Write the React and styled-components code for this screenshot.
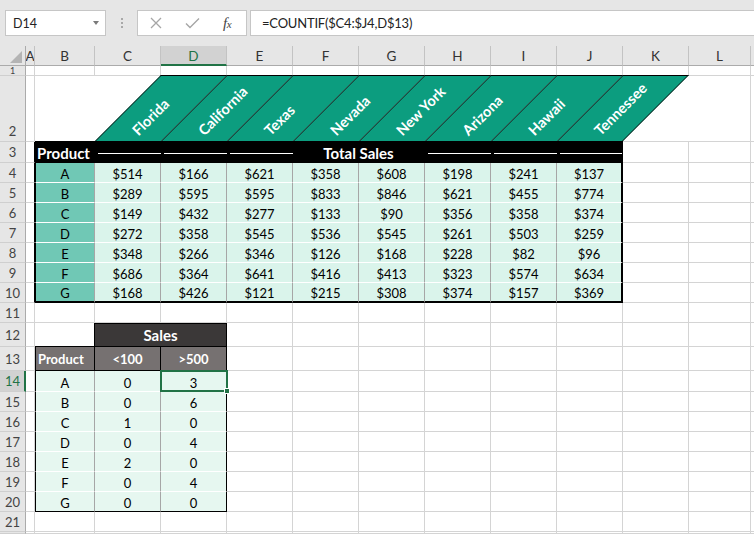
import React from 'react';
import styled, { createGlobalStyle } from 'styled-components';

const Global = createGlobalStyle`
  html, body { margin: 0; padding: 0; width: 754px; height: 534px; overflow: hidden; background: #fff; }
  body { font-family: Lato, "Liberation Sans", sans-serif; }
  *, *::before, *::after { box-sizing: border-box; }
`;

const GRID = '1px solid #d4d4d4';
const BLACK = '1px solid #000';
const BLACK2 = '2px solid #000';
const WHITE = '1px solid #fff';
const SEP = '1px solid #a6a6a6';
const NONE = 'none';
const GREEN = '#217346';

const TEAL_DARK = '#0c9d7f';
const TEAL = '#70c8b5';
const MINT = '#daf4eb';
const MINT2 = '#e6f7f0';
const DARK = '#3b3838';
const GREY = '#767171';

const STATES = ['Florida', 'California', 'Texas', 'Nevada', 'New York', 'Arizona', 'Hawaii', 'Tennessee'];
const PRODUCTS = ['A', 'B', 'C', 'D', 'E', 'F', 'G'];
const SALES = [
  [514, 166, 621, 358, 608, 198, 241, 137],
  [289, 595, 595, 833, 846, 621, 455, 774],
  [149, 432, 277, 133, 90, 356, 358, 374],
  [272, 358, 545, 536, 545, 261, 503, 259],
  [348, 266, 346, 126, 168, 228, 82, 96],
  [686, 364, 641, 416, 413, 323, 574, 634],
  [168, 426, 121, 215, 308, 374, 157, 369],
];
const COUNTS = [[0, 3], [0, 6], [1, 0], [0, 4], [2, 0], [0, 4], [0, 0]];
const COLS = ['A', 'B', 'C', 'D', 'E', 'F', 'G', 'H', 'I', 'J', 'K', 'L', ''];

const Window = styled.div`
  width: 754px;
  height: 534px;
  display: flex;
  flex-direction: column;
  overflow: hidden;
`;

const Bar = styled.div`
  flex: none;
  height: 46px;
  background: #e6e6e6;
  display: flex;
  align-items: flex-start;
  padding: 10px 0 0 5px;
  color: #222;
`;

const NameBox = styled.div`
  width: 101px;
  height: 26px;
  background: #fff;
  border: 1px solid #c6c6c6;
  display: flex;
  align-items: center;
  padding: 0 6px 0 7px;
  font-size: 12.5px;
`;

const Caret = styled.span`
  margin-left: auto;
  width: 0;
  height: 0;
  border-left: 3.5px solid transparent;
  border-right: 3.5px solid transparent;
  border-top: 4px solid #7a7a7a;
`;

const Grip = styled.div`
  margin-left: 15px;
  padding-top: 8px;
  display: flex;
  flex-direction: column;
  gap: 2px;
`;

const Dot = styled.span`
  width: 2px;
  height: 2px;
  background: #a8a8a8;
`;

const FxBox = styled.div`
  margin-left: 14px;
  width: 110px;
  height: 26px;
  background: #fff;
  border: 1px solid #c6c6c6;
  display: flex;
  align-items: center;
  padding-left: 12px;
  gap: 23px;
`;

const Fx = styled.span`
  font-family: "Liberation Serif", serif;
  font-style: italic;
  font-size: 15px;
  color: #444;
  display: flex;
  align-items: baseline;
  letter-spacing: -0.5px;
`;

const FxSub = styled.span`
  font-size: 11px;
`;

const FormulaInput = styled.div`
  flex: 1;
  margin-left: 3px;
  height: 26px;
  background: #fff;
  border: 1px solid #c6c6c6;
  border-right: none;
  display: flex;
  align-items: center;
  padding-left: 11px;
  font-size: 13px;
  letter-spacing: -0.2px;
  white-space: nowrap;
`;

const Sheet = styled.div`
  flex: 1;
  display: grid;
  grid-template-columns: 26px 9px 60px repeat(9, 66px) 62px 1fr;
  grid-template-rows: 20px 10px 66px 21px repeat(7, 20px) 20px 24px 24px 21px repeat(7, 20px) 1fr;
  background: #fff;
  overflow: hidden;
`;

const Corner = styled.div`
  background: #e6e6e6;
  border-right: 1px solid #ababab;
  border-bottom: 1px solid #ababab;
  display: flex;
  align-items: flex-end;
  justify-content: flex-end;
  padding: 0 3px 2px 0;
`;

const Triangle = styled.span`
  width: 0;
  height: 0;
  border-left: 12px solid transparent;
  border-bottom: 12px solid #b4b4b4;
`;

const ColHead = styled.div`
  background: ${p => (p.$sel ? '#d2d2d2' : '#e6e6e6')};
  border-right: 1px solid #c3c3c3;
  border-bottom: ${p => (p.$sel ? `2px solid ${GREEN}` : '1px solid #ababab')};
  color: ${p => (p.$sel ? GREEN : '#333')};
  font-size: 13.5px;
  display: flex;
  align-items: center;
  justify-content: center;
  padding-top: ${p => (p.$sel ? '1px' : '0')};
  overflow: hidden;
`;

const RowHead = styled.div`
  background: ${p => (p.$sel ? '#d2d2d2' : '#e6e6e6')};
  border-right: ${p => (p.$sel ? `2px solid ${GREEN}` : '1px solid #ababab')};
  border-bottom: 1px solid #cfcfcf;
  color: ${p => (p.$sel ? GREEN : '#444')};
  font-size: ${p => (p.$tiny ? '9px' : '13px')};
  line-height: ${p => (p.$tiny ? '9px' : 'normal')};
  display: flex;
  align-items: ${p => (p.$v === 'end' ? 'flex-end' : 'center')};
  justify-content: center;
  padding-bottom: ${p => (p.$v === 'end' ? '2px' : '0')};
  padding-left: ${p => (p.$sel ? '1px' : '0')};
  overflow: hidden;
`;

const Cell = styled.div`
  position: relative;
  display: flex;
  min-width: 0;
  align-items: ${p => (p.$v === 'center' ? 'center' : 'flex-end')};
  justify-content: ${p => (p.$align === 'center' ? 'center' : p.$align === 'right' ? 'flex-end' : 'flex-start')};
  padding: 0 2px 0 ${p => (p.$padL != null ? p.$padL : 2)}px;
  background: ${p => p.$bg || 'transparent'};
  border-right: ${p => p.$r || GRID};
  border-bottom: ${p => p.$b || GRID};
  border-left: ${p => p.$l || NONE};
  border-top: ${p => p.$t || NONE};
  color: ${p => p.$color || '#000'};
  font-size: ${p => p.$size || 13}px;
  font-weight: ${p => (p.$bold ? 700 : 400)};
  white-space: nowrap;
  grid-column: ${p => (p.$span ? `span ${p.$span}` : 'auto')};
`;

const SlantCell = styled.div`
  position: relative;
  border-bottom: ${BLACK};
`;

const Slant = styled.div`
  width: 66px;
  height: 66px;
  margin-top: -1px;
  background: ${TEAL_DARK};
  border-top: 1px solid #000;
  border-left: 1px solid #111;
  border-right: ${p => (p.$last ? '1px solid #111' : 'none')};
  transform-origin: 0 100%;
  transform: skewX(-45deg);
`;

const SlantLabel = styled.span`
  position: absolute;
  left: 45px;
  bottom: 3px;
  z-index: 1;
  color: #fff;
  font-size: 14.5px;
  font-weight: 700;
  line-height: 14px;
  white-space: nowrap;
  transform-origin: 0 100%;
  transform: rotate(-45deg);
`;

const Rule = styled.span`
  flex: 1;
  height: 1px;
  margin: 2px -3px 0 1px;
  background: #fff;
`;

const Selection = styled.div`
  position: absolute;
  left: -1px;
  top: -1px;
  right: -2px;
  bottom: -1px;
  border: 2px solid ${GREEN};
  z-index: 3;
  pointer-events: none;
`;

const Handle = styled.span`
  position: absolute;
  right: -4px;
  bottom: -4px;
  width: 6px;
  height: 6px;
  background: ${GREEN};
  border: 1px solid #fff;
`;

const XIcon = () => (
  <svg width="12" height="12" viewBox="0 0 12 12">
    <path d="M1 1 L11 11 M11 1 L1 11" stroke="#a6a6a6" strokeWidth="1.3" fill="none" />
  </svg>
);

const CheckIcon = () => (
  <svg width="15" height="12" viewBox="0 0 15 12">
    <path d="M1 6.5 L5 10.5 L14 1.5" stroke="#a6a6a6" strokeWidth="1.4" fill="none" />
  </svg>
);

function plain(row, from) {
  return COLS.slice(from).map((c, i) => <Cell key={`${row}-${from + i}`} />);
}

export default function App() {
  const rows = [];

  // Row 1
  rows.push(<RowHead key="h1" $tiny>1</RowHead>, ...plain(1, 0));

  // Row 2 – slanted headers
  rows.push(
    <RowHead key="h2" $v="end">2</RowHead>,
    <Cell key="2-A" />,
    <Cell key="2-B" $r={NONE} $b={BLACK} />,
    ...STATES.map((s, i) => (
      <SlantCell key={`2-s${i}`}>
        <Slant $last={i === STATES.length - 1} />
        <SlantLabel>{s}</SlantLabel>
      </SlantCell>
    )),
    <Cell key="2-K" $r={NONE} />,
    <Cell key="2-L" />,
    <Cell key="2-M" />
  );

  // Row 3 – header band
  const band = { $bg: '#000', $r: BLACK, $b: BLACK };
  rows.push(
    <RowHead key="h3">3</RowHead>,
    <Cell key="3-A" $r={BLACK} />,
    <Cell key="3-B" {...band} $l={BLACK} $padL={1} $color="#fff" $bold $size={15}>Product</Cell>,
    <Cell key="3-C" {...band} $v="center"><Rule /></Cell>,
    <Cell key="3-D" {...band} $v="center"><Rule /></Cell>,
    <Cell key="3-E" {...band} $v="center"><Rule /></Cell>,
    <Cell key="3-F" {...band} $span={2} $align="center" $color="#fff" $bold $size={15}>Total Sales</Cell>,
    <Cell key="3-H" {...band} $v="center"><Rule /></Cell>,
    <Cell key="3-I" {...band} $v="center"><Rule /></Cell>,
    <Cell key="3-J" {...band} $r={BLACK2} $v="center"><Rule /></Cell>,
    <Cell key="3-K" />,
    <Cell key="3-L" />,
    <Cell key="3-M" />
  );

  // Rows 4-10
  SALES.forEach((vals, i) => {
    const r = i + 4;
    const last = i === SALES.length - 1;
    const bottom = last ? BLACK2 : WHITE;
    rows.push(
      <RowHead key={`h${r}`}>{r}</RowHead>,
      <Cell key={`${r}-A`} $r={BLACK} />,
      <Cell key={`${r}-B`} $bg={TEAL} $l={BLACK} $r={SEP} $b={bottom} $align="center">{PRODUCTS[i]}</Cell>,
      ...vals.map((v, j) => (
        <Cell key={`${r}-v${j}`} $bg={MINT} $r={j === 7 ? BLACK2 : SEP} $b={bottom} $align="center">${v}</Cell>
      )),
      <Cell key={`${r}-K`} />,
      <Cell key={`${r}-L`} />,
      <Cell key={`${r}-M`} />
    );
  });

  // Row 11
  rows.push(<RowHead key="h11">11</RowHead>, ...plain(11, 0));

  // Row 12
  rows.push(
    <RowHead key="h12">12</RowHead>,
    <Cell key="12-A" />,
    <Cell key="12-B" $r={BLACK} $b={BLACK} />,
    <Cell key="12-C" $span={2} $bg={DARK} $t={BLACK} $r={BLACK} $b={BLACK} $align="center" $v="center" $color="#fff" $bold $size={15}>Sales</Cell>,
    ...plain(12, 4)
  );

  // Row 13
  const grey = { $bg: GREY, $r: BLACK, $b: BLACK, $color: '#fff', $bold: true, $v: 'center' };
  rows.push(
    <RowHead key="h13">13</RowHead>,
    <Cell key="13-A" />,
    <Cell key="13-B" {...grey} $l={BLACK} $padL={2}>Product</Cell>,
    <Cell key="13-C" {...grey} $align="center">&lt;100</Cell>,
    <Cell key="13-D" {...grey} $align="center">&gt;500</Cell>,
    ...plain(13, 4)
  );

  // Rows 14-20
  COUNTS.forEach((vals, i) => {
    const r = i + 14;
    const last = i === COUNTS.length - 1;
    const bottom = last ? BLACK : WHITE;
    rows.push(
      <RowHead key={`h${r}`} $sel={r === 14}>{r}</RowHead>,
      <Cell key={`${r}-A`} />,
      <Cell key={`${r}-B`} $bg={MINT2} $l={BLACK} $r={SEP} $b={bottom} $align="center">{PRODUCTS[i]}</Cell>,
      <Cell key={`${r}-C`} $bg={MINT2} $r={SEP} $b={bottom} $align="center">{vals[0]}</Cell>,
      <Cell key={`${r}-D`} $bg={MINT2} $r={BLACK} $b={bottom} $align="center">
        {vals[1]}
        {r === 14 && (
          <Selection>
            <Handle />
          </Selection>
        )}
      </Cell>,
      ...plain(r, 4)
    );
  });

  // Rows 21-22
  rows.push(<RowHead key="h21">21</RowHead>, ...plain(21, 0));
  rows.push(<RowHead key="h22"></RowHead>, ...plain(22, 0));

  return (
    <>
      <Global />
      <Window>
        <Bar>
          <NameBox>
            D14
            <Caret />
          </NameBox>
          <Grip>
            <Dot />
            <Dot />
            <Dot />
          </Grip>
          <FxBox>
            <XIcon />
            <CheckIcon />
            <Fx>
              f<FxSub>x</FxSub>
            </Fx>
          </FxBox>
          <FormulaInput>=COUNTIF($C4:$J4,D$13)</FormulaInput>
        </Bar>
        <Sheet>
          <Corner>
            <Triangle />
          </Corner>
          {COLS.map((c, i) => (
            <ColHead key={`c${i}`} $sel={c === 'D'}>
              {c}
            </ColHead>
          ))}
          {rows}
        </Sheet>
      </Window>
    </>
  );
}
